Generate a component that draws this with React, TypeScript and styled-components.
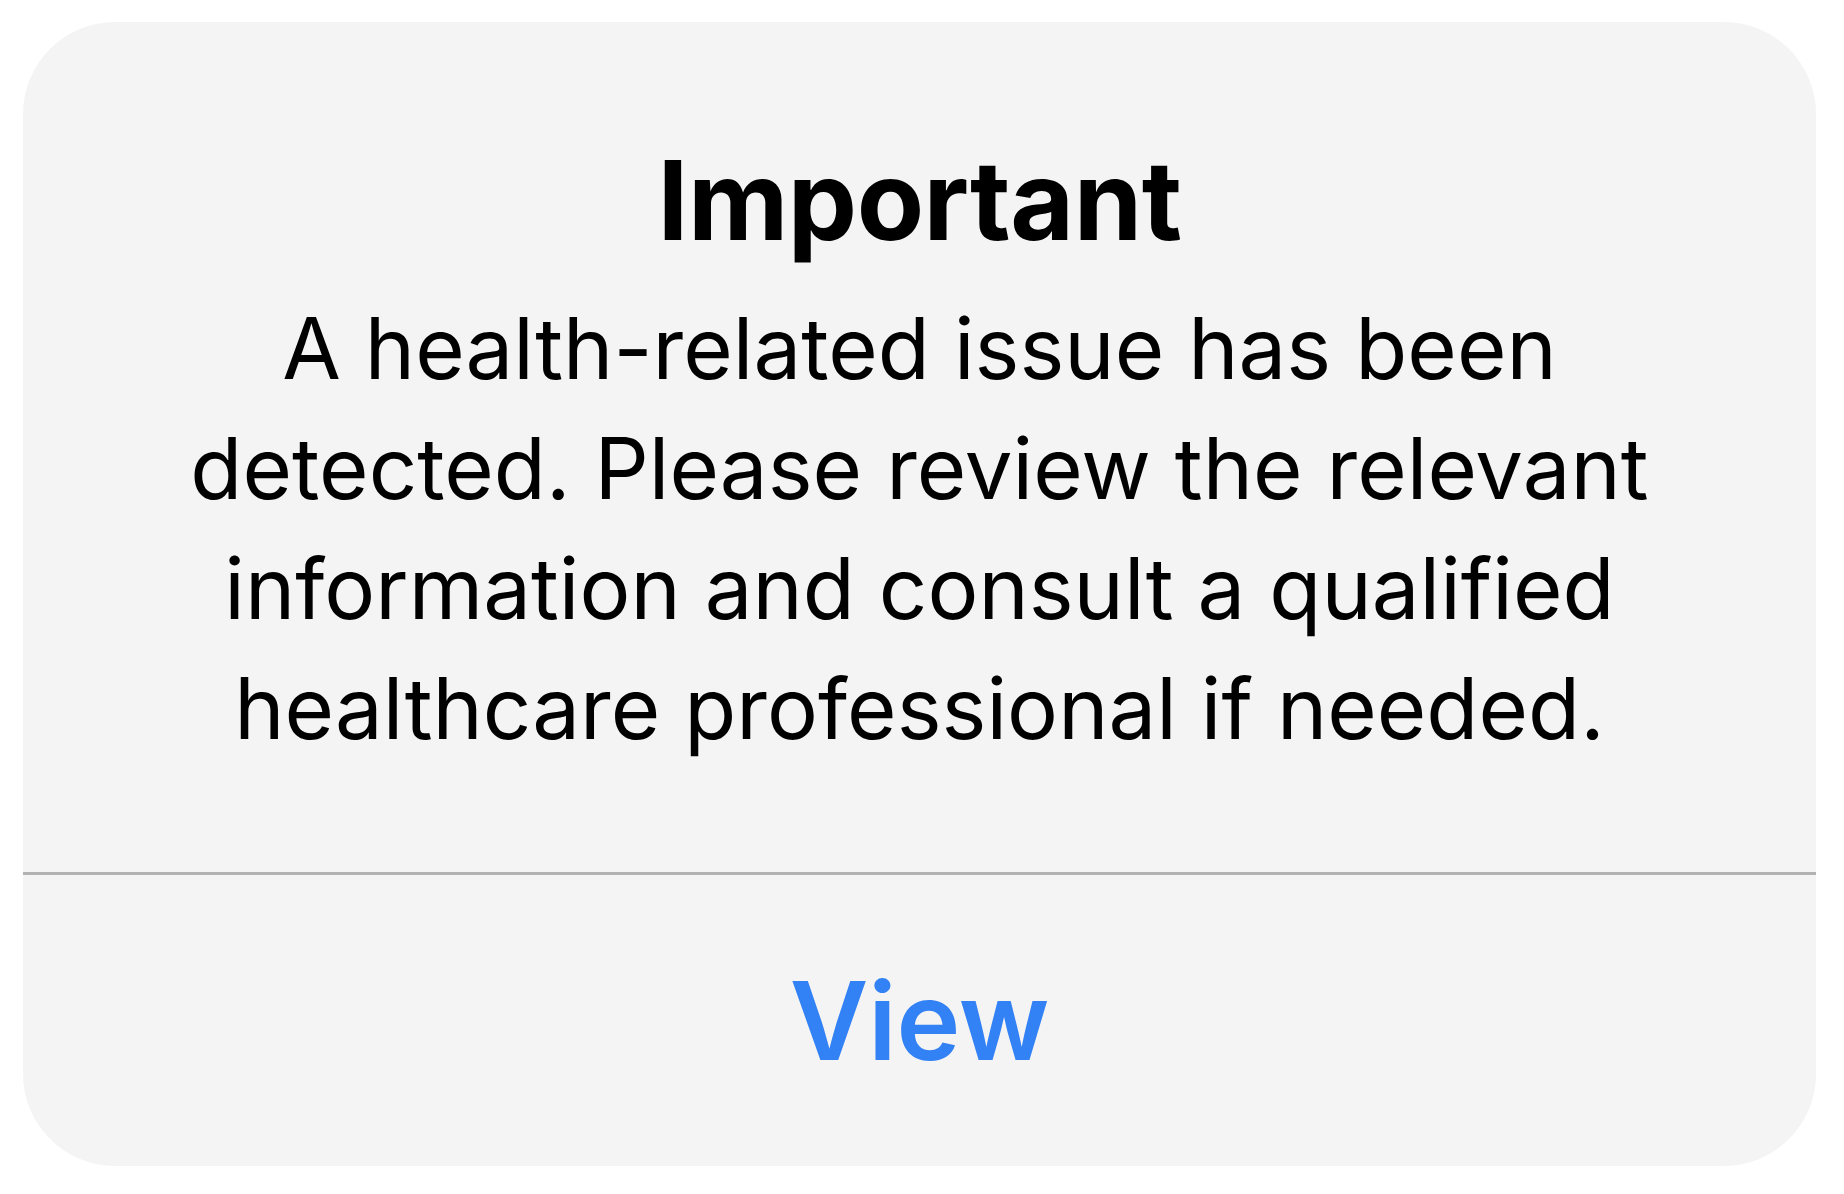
import React from "react";
import styled, { createGlobalStyle } from "styled-components";

const Global = createGlobalStyle`
  html, body { margin: 0; padding: 0; background: #ffffff; }
  body { font-family: Inter, "Noto Sans", sans-serif; }
`;

const Page = styled.div`
  width: 1844px;
  height: 1194px;
  box-sizing: border-box;
  padding: 22px 28px 28px 23px;
  display: flex;
`;

const Card = styled.div`
  flex: 1;
  height: 1144px;
  background: #f4f4f4;
  border-radius: 92px;
  display: flex;
  flex-direction: column;
  overflow: hidden;
`;

const Content = styled.div`
  padding: 112px 60px 0;
  height: 850px;
  box-sizing: border-box;
  display: flex;
  flex-direction: column;
  align-items: center;
`;

const Title = styled.h1`
  margin: 0;
  font-family: Inter, sans-serif;
  font-weight: 700;
  font-size: 110px;
  line-height: 132px;
  color: #000;
  letter-spacing: -0.5px;
`;

const Body = styled.p`
  margin: 23px 0 0;
  font-family: Inter, sans-serif;
  font-weight: 400;
  font-size: 85px;
  line-height: 120px;
  color: #000;
  text-align: center;
  letter-spacing: 0.05px;
`;

const Divider = styled.div`
  height: 3px;
  background: #b2b2b2;
`;

const ActionButton = styled.button`
  flex: 1;
  border: none;
  background: transparent;
  font-family: Inter, sans-serif;
  font-weight: 600;
  font-size: 108px;
  color: #3281f5;
  cursor: pointer;
  padding: 0;
`;

export default function App() {
  return (
    <>
      <Global />
      <Page>
        <Card>
          <Content>
            <Title>Important</Title>
            <Body>
              A health-related issue has been
              <br />
              detected. Please review the relevant
              <br />
              information and consult a qualified
              <br />
              healthcare professional if needed.
            </Body>
          </Content>
          <Divider />
          <ActionButton>View</ActionButton>
        </Card>
      </Page>
    </>
  );
}
